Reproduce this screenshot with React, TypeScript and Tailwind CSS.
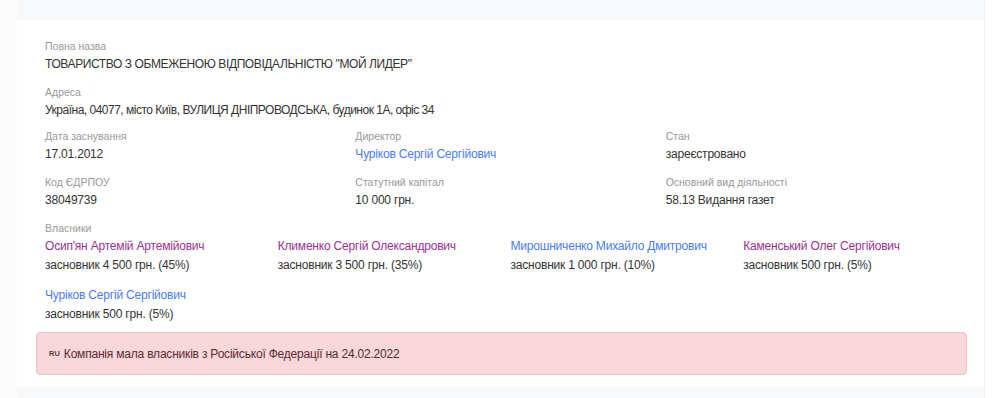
import React from "react";

const BLUE = "text-[#4a7bf0]";
const PURPLE = "text-[#9c2f8e]";

function Field({
  label,
  children,
  mb = "mb-[10px]",
  track = "tracking-[-0.2px]",
}: {
  label: string;
  children: React.ReactNode;
  mb?: string;
  track?: string;
}) {
  return (
    <div className={mb}>
      <div className="text-[10.5px] leading-[16px] text-[#999]">{label}</div>
      <div className={`text-[12px] leading-[20px] text-[#333] ${track}`}>{children}</div>
    </div>
  );
}

const owners = [
  { name: "Осип'ян Артемій Артемійович", amount: "засновник 4 500 грн. (45%)", color: PURPLE },
  { name: "Клименко Сергій Олександрович", amount: "засновник 3 500 грн. (35%)", color: PURPLE },
  { name: "Мирошниченко Михайло Дмитрович", amount: "засновник 1 000 грн. (10%)", color: BLUE },
  { name: "Каменський Олег Сергійович", amount: "засновник 500 грн. (5%)", color: PURPLE },
  { name: "Чуріков Сергій Сергійович", amount: "засновник 500 грн. (5%)", color: BLUE },
];

export default function App() {
  return (
    <div
      className="flex w-[1000px] h-[398px] bg-white overflow-hidden"
      style={{ fontFamily: '"Liberation Sans", Arial, sans-serif' }}
    >
      <div className="w-[17px] bg-[#fcfcfc]" />
      <div className="w-[968px] bg-[#f7f8f9] pt-[20px] border-r border-[#f0f0f0]">
        <div className="bg-white pl-[19px] pr-[17px] pt-[18px] pb-[12px]">
          <div className="px-[9px]">
            <Field label="Повна назва" track="tracking-[-0.4px]">
              ТОВАРИСТВО З ОБМЕЖЕНОЮ ВІДПОВІДАЛЬНІСТЮ "МОЙ ЛИДЕР"
            </Field>
            <Field label="Адреса" mb="mb-[8px]" track="tracking-[-0.5px]">
              Україна, 04077, місто Київ, ВУЛИЦЯ ДНІПРОВОДСЬКА, будинок 1А, офіс 34
            </Field>
          </div>
          <div className="grid grid-cols-3">
            <div className="px-[9px]">
              <Field label="Дата заснування">17.01.2012</Field>
            </div>
            <div className="px-[9px]">
              <Field label="Директор">
                <span className={BLUE}>Чуріков Сергій Сергійович</span>
              </Field>
            </div>
            <div className="px-[9px]">
              <Field label="Стан">зареєстровано</Field>
            </div>
            <div className="px-[9px]">
              <Field label="Код ЄДРПОУ">38049739</Field>
            </div>
            <div className="px-[9px]">
              <Field label="Статутний капітал">10 000 грн.</Field>
            </div>
            <div className="px-[9px]">
              <Field label="Основний вид діяльності">58.13 Видання газет</Field>
            </div>
          </div>
          <div className="px-[9px] text-[10.5px] leading-[16px] text-[#999]">Власники</div>
          <div className="grid grid-cols-4 gap-y-[11px]">
            {owners.map((o) => (
              <div key={o.name} className="px-[9px] text-[12px] tracking-[-0.2px]">
                <div className={`leading-[20px] whitespace-nowrap ${o.color}`}>{o.name}</div>
                <div className="leading-[18px] text-[#333]">{o.amount}</div>
              </div>
            ))}
          </div>
          <div className="mt-[9px] h-[43px] flex items-center px-[12px] bg-[#f8d7da] border border-[#f3c3c8] rounded-[4px] text-[12px] tracking-[-0.2px] text-[#5a2a33]">
            <span className="text-[7.5px] font-semibold mr-[4px] text-[#6b3a45] tracking-normal">RU</span>
            Компанія мала власників з Російської Федерації на 24.02.2022
          </div>
        </div>
      </div>
    </div>
  );
}
